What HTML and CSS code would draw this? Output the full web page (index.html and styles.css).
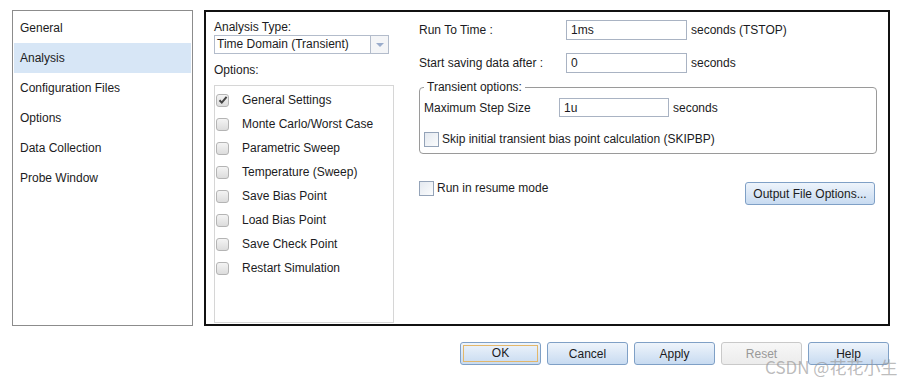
FILE: index.html
```html
<!DOCTYPE html>
<html lang="en">
<head>
    <meta charset="UTF-8">
    <title>Simulation Settings</title>
    <link rel="stylesheet" href="styles.css">
</head>
<body>
    <div class="top">
        <ul class="nav">
            <li>General</li>
            <li class="active">Analysis</li>
            <li>Configuration Files</li>
            <li>Options</li>
            <li>Data Collection</li>
            <li>Probe Window</li>
        </ul>

        <div class="panel">
            <div class="left-col">
                <div class="label">Analysis Type:</div>
                <div class="select">
                    <span class="select-text">Time Domain (Transient)</span>
                    <span class="select-arrow"><i></i></span>
                </div>
                <div class="label options-label">Options:</div>
                <div class="option-list">
                    <div class="opt"><span class="cb checked"><svg width="10" height="10" viewBox="0 0 10 10"><path d="M1.5 5.2 L3.8 7.6 L8.6 1.8" fill="none" stroke="#444" stroke-width="2"/></svg></span>General Settings</div>
                    <div class="opt"><span class="cb"></span>Monte Carlo/Worst Case</div>
                    <div class="opt"><span class="cb"></span>Parametric Sweep</div>
                    <div class="opt"><span class="cb"></span>Temperature (Sweep)</div>
                    <div class="opt"><span class="cb"></span>Save Bias Point</div>
                    <div class="opt"><span class="cb"></span>Load Bias Point</div>
                    <div class="opt"><span class="cb"></span>Save Check Point</div>
                    <div class="opt"><span class="cb"></span>Restart Simulation</div>
                </div>
            </div>

            <div class="right-col">
                <div class="field-row">
                    <span class="field-label">Run To Time :</span>
                    <span class="input">1ms</span>
                    <span class="unit">seconds (TSTOP)</span>
                </div>
                <div class="field-row second">
                    <span class="field-label">Start saving data after :</span>
                    <span class="input">0</span>
                    <span class="unit">seconds</span>
                </div>

                <fieldset class="group">
                    <legend>Transient options:</legend>
                    <div class="field-row inner">
                        <span class="field-label">Maximum Step Size</span>
                        <span class="input">1u</span>
                        <span class="unit">seconds</span>
                    </div>
                    <div class="check-row skip">
                        <span class="box"></span>Skip initial transient bias point calculation (SKIPBP)
                    </div>
                </fieldset>

                <div class="resume-row">
                    <div class="check-row">
                        <span class="box"></span>Run in resume mode
                    </div>
                    <button class="btn output-btn">Output File Options...</button>
                </div>
            </div>
        </div>
    </div>

    <div class="buttons">
        <button class="btn focus"><span>OK</span></button>
        <button class="btn">Cancel</button>
        <button class="btn">Apply</button>
        <button class="btn disabled">Reset</button>
        <button class="btn">Help</button>
    </div>

    <div class="watermark">CSDN @花花小生</div>
</body>
</html>
```

FILE: styles.css
```css
body {
    margin: 0;
    padding: 10px 0 0 12px;
    width: 892px;
    height: 371px;
    position: relative;
    background: #fff;
    font-family: "Liberation Sans", Arial, sans-serif;
    font-size: 12px;
    color: #1b1b22;
    overflow: hidden;
}

.top {
    display: flex;
    align-items: flex-start;
}

/* left navigation */
.nav {
    list-style: none;
    margin: 0;
    padding: 2px 1px 0 1px;
    width: 177px;
    height: 312px;
    border: 1px solid #8c8c8c;
}
.nav li {
    height: 30px;
    line-height: 30px;
    padding-left: 6px;
}
.nav li.active {
    background-color: #d7e6f6;
}

/* main panel */
.panel {
    margin-left: 11px;
    width: 682px;
    height: 312px;
    border: 2px solid #111;
    display: flex;
    align-items: flex-start;
}

.left-col {
    margin: 8px 0 0 8px;
    width: 180px;
}
.label {
    line-height: 14px;
}
.options-label {
    margin-top: 9px;
}
.select {
    margin-top: 1px;
    width: 173px;
    height: 17px;
    border: 1px solid #b3bccb;
    display: flex;
}
.select-text {
    flex: 1;
    line-height: 17px;
    padding-left: 2px;
}
.select-arrow {
    width: 17px;
    border-left: 1px solid #b3bccb;
    background: #f4f5f7;
    display: flex;
    align-items: center;
    justify-content: center;
}
.select-arrow i {
    width: 0;
    height: 0;
    border-left: 4px solid transparent;
    border-right: 4px solid transparent;
    border-top: 4px solid #9aaccb;
}

.option-list {
    margin-top: 8px;
    height: 234px;
    border: 1px solid #d6d6d6;
    padding-top: 2px;
}
.opt {
    height: 24px;
    line-height: 22px;
    display: flex;
    align-items: center;
}
.cb {
    width: 11px;
    height: 11px;
    margin: 0 13px 0 1px;
    border: 1px solid #b4b4b4;
    border-radius: 3px;
    background: linear-gradient(#f4f4f4, #dcdcdc);
    display: flex;
    align-items: center;
    justify-content: center;
}

/* right column */
.right-col {
    margin: 8px 0 0 25px;
    width: 458px;
}
.field-row {
    display: flex;
    align-items: center;
    height: 20px;
}
.field-row.second {
    margin-top: 13px;
}
.field-label {
    width: 147px;
}
.input {
    width: 115px;
    height: 18px;
    line-height: 19px;
    padding-left: 4px;
    border: 1px solid #a9b3c3;
    background: #fff;
}
.unit {
    margin-left: 4px;
}

.group {
    margin: 7px 0 0 0;
    padding: 0 4px 7px 4px;
    border: 1px solid #9a9a9a;
    border-radius: 4px;
}
.group legend {
    padding: 0 3px;
    line-height: 14px;
}
.field-row.inner {
    margin-top: 4px;
    height: 19px;
}
.field-row.inner .field-label {
    width: 135px;
}
.field-row.inner .input {
    width: 104px;
    height: 17px;
    line-height: 18px;
}
.check-row {
    display: flex;
    align-items: center;
    height: 14px;
}
.check-row.skip {
    margin-top: 15px;
}
.box {
    width: 13px;
    height: 13px;
    margin-right: 3px;
    border: 1px solid #94a3b8;
    background: linear-gradient(135deg, #e4e9f0, #fbfcfd);
}

.resume-row {
    margin-top: 27px;
    display: flex;
    justify-content: space-between;
    align-items: flex-start;
    padding-right: 2px;
}

/* buttons */
.btn {
    font-family: "Liberation Sans", Arial, sans-serif;
    font-size: 12px;
    color: #1b1b22;
    height: 23px;
    width: 81px;
    padding: 0;
    border: 1px solid #7fa0c6;
    border-radius: 3px;
    background: linear-gradient(#eef4fb, #c8dbf1);
}
.output-btn {
    width: 130px;
    height: 23px;
    margin-top: 1px;
}
.buttons {
    margin-top: 16px;
    display: flex;
    justify-content: flex-end;
    gap: 6px;
    padding-right: 15px;
}
.btn.focus {
    padding: 2px;
}
.btn.focus span {
    display: block;
    height: 15px;
    line-height: 15px;
    border: 1px solid #e3b76a;
}
.btn.disabled {
    color: #999;
    border-color: #c9c9c9;
    background: linear-gradient(#f7f7f7, #ececec);
}

/* CSDN watermark laid over the button row */
.watermark {
    position: absolute;
    left: 765px;
    top: 358px;
    font-family: "Noto Sans CJK SC", "Liberation Sans", sans-serif;
    font-size: 17px;
    line-height: 17px;
    color: rgba(150, 150, 150, 0.65);
    white-space: nowrap;
}
```
